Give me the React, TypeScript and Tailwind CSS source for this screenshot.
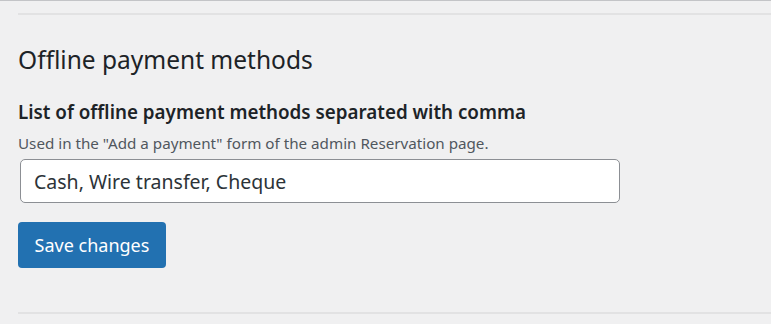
import { useState } from 'react';

export default function App() {
  const [methods, setMethods] = useState('Cash, Wire transfer, Cheque');

  return (
    <div className="h-[324px] w-full overflow-hidden border-t border-[#c3c4c7] bg-[#f0f0f1] pl-[18px] font-['Noto_Sans',sans-serif] text-[#1d2327]">
      <hr className="mt-[12px] border-t-2 border-[#e2e2e3]" />

      {/* Offline payments */}
      <h2 className="mt-[29px] text-[24.5px] leading-[32px] font-normal">Offline payment methods</h2>

      <form onSubmit={e => e.preventDefault()}>
        <label htmlFor="methods" className="mt-[23px] block text-[18.8px] leading-[26px] font-semibold text-[#1d2327]">
          List of offline payment methods separated with comma
        </label>
        <p className="mt-[8px] text-[15.2px] leading-[20px] text-[#50575e]">
          Used in the "Add a payment" form of the admin Reservation page.
        </p>
        <input id="methods" value={methods} onChange={e => setMethods(e.target.value)}
          className="mt-[6px] ml-[2px] block h-[44px] w-[600px] rounded-[5px] border border-[#8c8f94] bg-white px-[13px] text-[19.5px] text-[#2c3338] outline-none" />
        <button type="submit"
          className="mt-[19px] h-[46px] w-[148px] rounded-[4px] bg-[#2271b1] text-[18px] text-white hover:bg-[#135e96]">
          Save changes
        </button>
      </form>

      <hr className="mt-[44px] border-t-2 border-[#e2e2e3]" />
    </div>
  );
}
